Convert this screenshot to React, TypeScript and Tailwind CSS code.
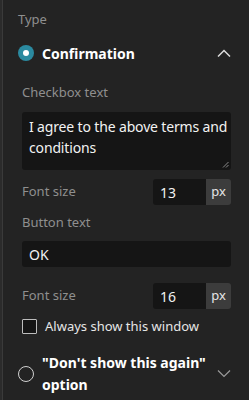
import React from "react";

const ChevronUp = () => (
  <svg width="14" height="8" viewBox="0 0 14 8" fill="none" stroke="#dcdcdc" strokeWidth="1.5">
    <path d="M1 7.5 L7 1.5 L13 7.5" />
  </svg>
);

const ChevronDown = () => (
  <svg width="14" height="8" viewBox="0 0 14 8" fill="none" stroke="#9a9a9a" strokeWidth="1.2">
    <path d="M1 0.5 L7 6.5 L13 0.5" />
  </svg>
);

const SizeField = ({ value }: { value: string }) => (
  <div className="flex items-center justify-between">
    <div className="text-[13px] text-[#8f8f8f]">Font size</div>
    <div className="flex h-[26px] w-[78px] rounded-[3px] overflow-hidden">
      <div className="flex-1 bg-[#151515] text-[#f2f2f2] text-[14px] pl-[7px] flex items-center">
        {value}
      </div>
      <div className="w-[25px] bg-[#3c3c3c] text-[#e6e6e6] text-[13px] flex items-center justify-center">
        px
      </div>
    </div>
  </div>
);

const App = () => {
  return (
    <div
      className="w-[249px] h-[400px] bg-[#232323] overflow-hidden flex"
      style={{ fontFamily: '"Noto Sans", "Open Sans", sans-serif' }}
    >
      <div className="w-[2px] bg-[#2b2b2b]"></div>
      <div className="w-px bg-[#3a3a3a]"></div>
      <div className="flex-1 flex flex-col">
        <div className="pl-[15px] pt-[10px] h-[36px] text-[13px] text-[#8f8f8f]">Type</div>
        <div className="flex items-center h-[34px] pl-[15px] pr-[18px]">
          <div className="w-[16px] h-[16px] rounded-full bg-[#2b8aa0] flex items-center justify-center">
            <div className="w-[6px] h-[6px] rounded-full bg-white"></div>
          </div>
          <div className="ml-[8px] flex-1 text-[14px] font-bold text-white">Confirmation</div>
          <ChevronUp />
        </div>
        <div className="pl-[19px] pr-[18px] flex flex-col">
          <div className="mt-[13px] text-[13px] text-[#8f8f8f] leading-[18px]">Checkbox text</div>
          <div className="mt-[11px] relative h-[58px] bg-[#151515] rounded-[3px] pl-[7px] pr-[2px] pt-[4px] text-[14px] leading-[21px] tracking-[-0.15px] text-[#f2f2f2]">
            I agree to the above terms and conditions
            <svg className="absolute right-[2px] bottom-[2px]" width="7" height="7" viewBox="0 0 7 7" stroke="#8a8a8a" strokeWidth="1">
              <path d="M1 6.5 L6.5 1 M4 6.5 L6.5 4" />
            </svg>
          </div>
          <div className="mt-[9px]">
            <SizeField value="13" />
          </div>
          <div className="mt-[8px] text-[13px] text-[#8f8f8f] leading-[18px]">Button text</div>
          <div className="mt-[10px] h-[26px] bg-[#151515] rounded-[3px] px-[7px] flex items-center text-[14px] text-[#f2f2f2]">
            OK
          </div>
          <div className="mt-[16px]">
            <SizeField value="16" />
          </div>
          <div className="mt-[8px] flex items-center">
            <div className="w-[15px] h-[15px] border-[1.5px] border-[#bdbdbd] bg-[#151515] rounded-[1px]"></div>
            <div className="ml-[8px] text-[13px] text-[#e6e6e6]">Always show this window</div>
          </div>
        </div>
        <div className="mt-[15px] flex items-center pl-[15px] pr-[18px]">
          <div className="w-[16px] h-[16px] rounded-full border-[1.5px] border-[#d0d0d0]"></div>
          <div className="ml-[8px] flex-1 text-[14px] font-bold text-white leading-[22px]">
            "Don't show this again"
            <br />
            option
          </div>
          <ChevronDown />
        </div>
      </div>
    </div>
  );
};

export default App;
